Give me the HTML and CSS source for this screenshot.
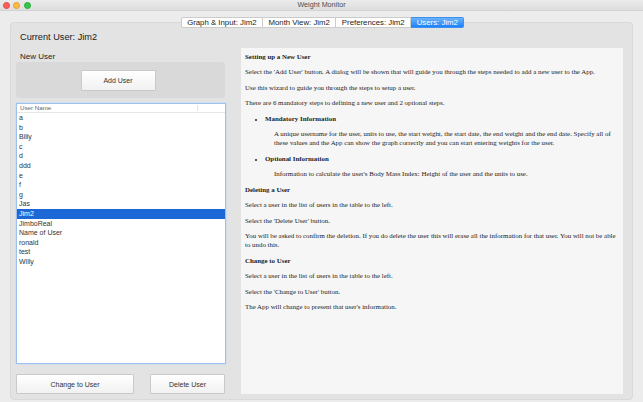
FILE: index.html
```html
<!DOCTYPE html>
<html>
<head>
<meta charset="utf-8">
<title>Weight Monitor</title>
<link rel="stylesheet" href="styles.css">
</head>
<body>
<div class="titlebar">
  <div class="lights">
    <span class="light red"></span>
    <span class="light yellow"></span>
    <span class="light green"></span>
  </div>
  <div class="title">Weight Monitor</div>
  <div class="spacer"></div>
</div>
<div class="tabs">
  <div class="tab">Graph &amp; Input: Jim2</div>
  <div class="tab">Month View: Jim2</div>
  <div class="tab">Preferences: Jim2</div>
  <div class="tab active">Users: Jim2</div>
</div>
<div class="tabbox">
  <div class="leftcol">
    <div class="heading">Current User: Jim2</div>
    <div class="label">New User</div>
    <div class="addbox"><button class="btn add">Add User</button></div>
    <div class="table">
      <div class="thead"><div class="th">User Name</div><div class="th"></div></div>
      <div class="row">a</div>
      <div class="row">b</div>
      <div class="row">Billy</div>
      <div class="row">c</div>
      <div class="row">d</div>
      <div class="row">ddd</div>
      <div class="row">e</div>
      <div class="row">f</div>
      <div class="row">g</div>
      <div class="row">Jas</div>
      <div class="row selected">Jim2</div>
      <div class="row">JimboReal</div>
      <div class="row">Name of User</div>
      <div class="row">ronald</div>
      <div class="row">test</div>
      <div class="row">Willy</div>
    </div>
    <div class="buttons">
      <button class="btn change">Change to User</button>
      <button class="btn delete">Delete User</button>
    </div>
  </div>
  <div class="help">
    <p class="b">Setting up a New User</p>
    <p>Select the 'Add User' button. A dialog will be shown that will guide you through the steps needed to add a new user to the App.</p>
    <p>Use this wizard to guide you through the steps to setup a user.</p>
    <p>There are 6 mandatory steps to defining a new user and 2 optional steps.</p>
    <ul>
      <li><p class="b">Mandatory Information</p>
        <p class="sub">A unique username for the user, units to use, the start weight, the start date, the end weight and the end date. Specify all of these values and the App can show the graph correctly and you can start entering weights for the user.</p></li>
      <li><p class="b">Optional Information</p>
        <p class="sub">Information to calculate the user's Body Mass Index: Height of the user and the units to use.</p></li>
    </ul>
    <p class="b">Deleting a User</p>
    <p>Select a user in the list of users in the table to the left.</p>
    <p>Select the 'Delete User' button.</p>
    <p>You will be asked to confirm the deletion. If you do delete the user this will erase all the information for that user. You will not be able to undo this.</p>
    <p class="b">Change to User</p>
    <p>Select a user in the list of users in the table to the left.</p>
    <p>Select the 'Change to User' button.</p>
    <p>The App will change to present that user's information.</p>
  </div>
</div>
</body>
</html>
```

FILE: styles.css
```css
* { box-sizing: border-box; }
html, body { margin: 0; padding: 0; }
body {
  width: 643px;
  height: 402px;
  overflow: hidden;
  background: #ececec;
  font-family: "Liberation Sans", Arial, sans-serif;
  display: flex;
  flex-direction: column;
}
.titlebar {
  height: 11px;
  flex: none;
  display: grid;
  grid-template-columns: 1fr auto 1fr;
  align-items: center;
  background: linear-gradient(#ebebeb, #dedede);
  border-bottom: 1px solid #d2d2d2;
}
.lights { display: flex; gap: 3.5px; padding-left: 2.5px; }
.light { width: 7px; height: 7px; border-radius: 50%; }
.red { background: #fc605b; border: 0.5px solid #de4a45; }
.yellow { background: #fdbc40; border: 0.5px solid #de9f34; }
.green { background: #34c84a; border: 0.5px solid #27aa35; }
.title { font-size: 7.2px; color: #4d4d4d; line-height: 10px; }
.tabs {
  flex: none;
  display: flex;
  justify-content: center;
  margin-top: 6px;
  padding-left: 2px;
  height: 11px;
  position: relative;
  z-index: 1;
}
.tab {
  font-size: 7.8px;
  line-height: 9px;
  padding: 0 5.5px;
  background: #fff;
  color: #222;
  border: 1px solid #cbcbcb;
  border-left: none;
  white-space: nowrap;
}
.tab:first-child { border-left: 1px solid #cbcbcb; border-radius: 2px 0 0 2px; }
.tab.active {
  background: linear-gradient(#6cb3fa, #1a82fb);
  border-color: #3d8ff0;
  color: #fff;
  border-radius: 0 2px 2px 0;
}
.tabbox {
  flex: 1;
  margin: -6px 10px 2px 10px;
  background: #e3e3e3;
  border: 1px solid #d9d9d9;
  border-radius: 4px;
  padding: 7px 9px 5px 5px;
  display: grid;
  grid-template-columns: 210px 382px;
  column-gap: 15px;
}
.leftcol { display: flex; flex-direction: column; min-height: 0; }
.heading { font-size: 9.2px; line-height: 14px; padding-left: 4px; color: #1a1a1a; }
.label { font-size: 8px; line-height: 10px; margin-top: 8px; padding-left: 4px; color: #222; }
.addbox {
  height: 36px;
  margin-right: 1px;
  background: #d9d9d9;
  border-radius: 3px;
  display: flex;
  align-items: center;
  justify-content: center;
  padding-right: 5px;
}
.btn {
  font-family: "Liberation Sans", Arial, sans-serif;
  font-size: 7px;
  color: #333;
  background: linear-gradient(#ffffff, #f1f1f1);
  border: 1px solid #c9c9c9;
  border-radius: 1px;
  height: 20px;
  padding: 0;
}
.add { width: 75px; height: 21px; }
.table {
  margin-top: 5px;
  flex: 1;
  background: #fff;
  border: 1px solid #9dc0ec;
  box-shadow: 0 0 0 0.5px #c4d9f4;
  overflow: hidden;
}
.thead {
  display: grid;
  grid-template-columns: 181px 1fr;
  height: 9px;
  border-bottom: 1px solid #e6e6e6;
}
.th { font-size: 6.2px; line-height: 8px; color: #666; padding-left: 3px; }
.th:first-child { border-right: 1px solid #e2e2e2; margin: 1px 0; line-height: 6px; }
.row { height: 9.6px; font-size: 7px; line-height: 9.6px; padding-left: 2px; color: #333; }
.row.selected { background: #1b68d6; color: #fff; }
.buttons {
  display: flex;
  justify-content: space-between;
  margin-top: 10px;
  margin-right: 1px;
}
.change { width: 118px; }
.delete { width: 75px; }
.help {
  margin-top: 18px;
  background: #f6f6f6;
  padding: 3.5px 4px 0 4px;
  font-family: "Liberation Serif", "Times New Roman", serif;
  font-size: 6.9px;
  line-height: 9px;
  color: #222;
}
.help p { margin: 0 0 6.5px 0; }
.help .b { font-weight: bold; }
.help ul { margin: 0; padding-left: 20px; }
.help li::marker { font-size: 6px; }
.help .sub { margin-left: 9px; }
```
